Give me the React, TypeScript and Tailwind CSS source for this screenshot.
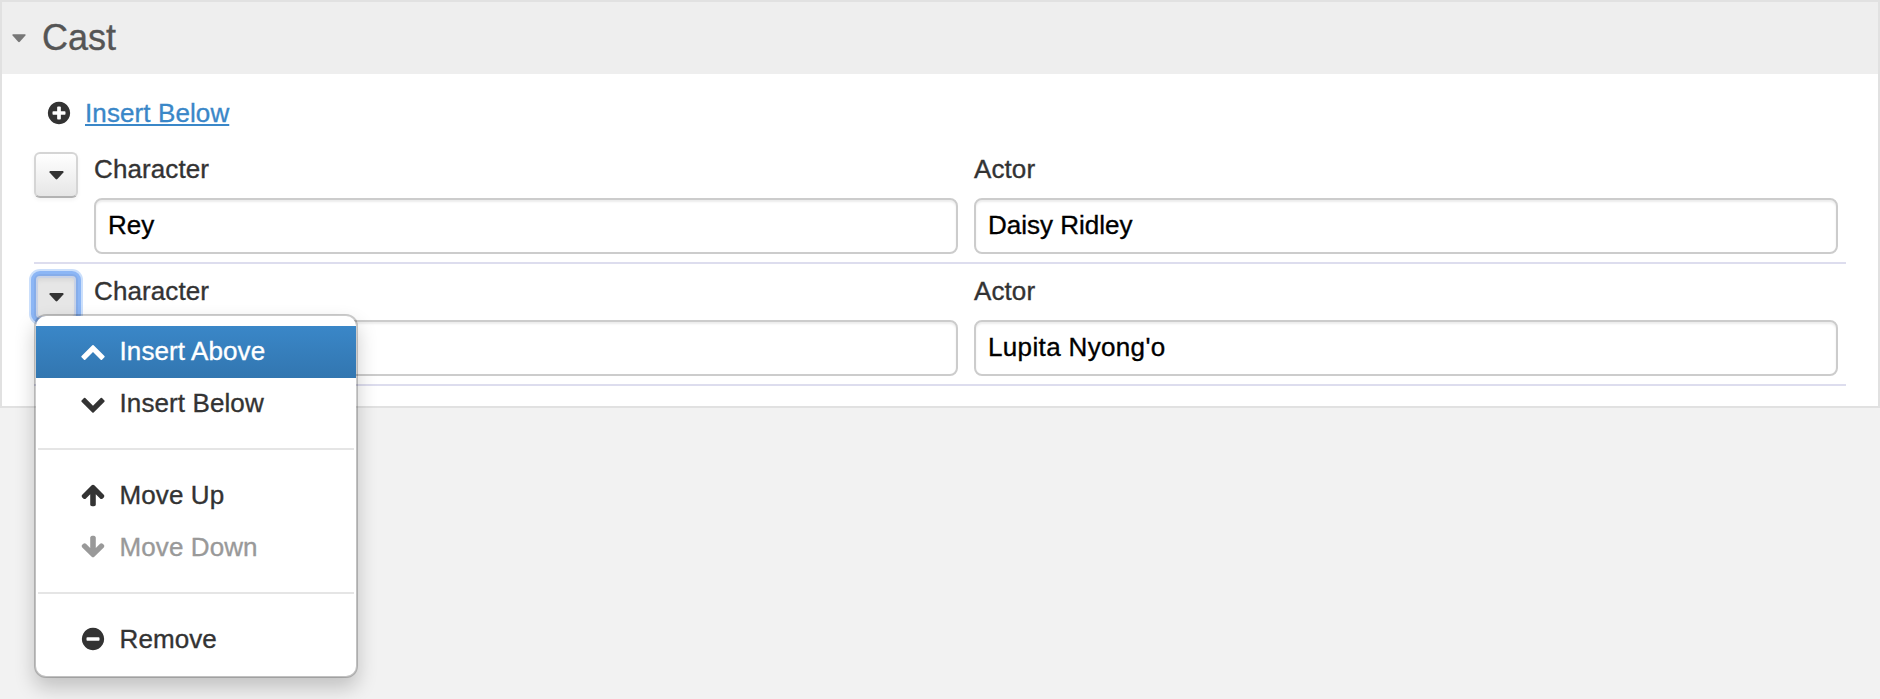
import React from "react";

const circle =
  "M1664 896q0 209-103 385.5t-279.5 279.5-385.5 103-385.5-103-279.5-279.5-103-385.5 103-385.5 279.5-279.5 385.5-103 385.5 103 279.5 279.5 103 385.5z";

const icons = {
  plus:
    "M1344 960v-128q0-26-19-45t-45-19h-256v-256q0-26-19-45t-45-19h-128q-26 0-45 19t-19 45v256h-256q-26 0-45 19t-19 45v128q0 26 19 45t45 19h256v256q0 26 19 45t45 19h128q26 0 45-19t19-45v-256h256q26 0 45-19t19-45z" +
    circle,
  minus:
    "M1344 960v-128q0-26-19-45t-45-19h-768q-26 0-45 19t-19 45v128q0 26 19 45t45 19h768q26 0 45-19t19-45z" +
    circle,
  chevronUp:
    "M1683 1331l-166 165q-19 19-45 19t-45-19l-531-531-531 531q-19 19-45 19t-45-19l-166-165q-19-19-19-45.5t19-45.5l742-741q19-19 45-19t45 19l742 741q19 19 19 45.5t-19 45.5z",
  chevronDown:
    "M1683 808l-742 741q-19 19-45 19t-45-19l-742-741q-19-19-19-45.5t19-45.5l166-165q19-19 45-19t45 19l531 531 531-531q19-19 45-19t45 19l166 165q19 19 19 45.5t-19 45.5z",
  arrowUp:
    "M1675 971q0 51-37 90l-75 75q-38 38-91 38-54 0-90-38l-294-293v704q0 52-37.5 84.5t-90.5 32.5h-128q-53 0-90.5-32.5t-37.5-84.5v-704l-294 293q-36 38-90 38t-90-38l-75-75q-38-38-38-90 0-53 38-91l651-651q35-37 90-37 54 0 91 37l651 651q37 39 37 91z",
  arrowDown:
    "M1675 832q0 53-37 90l-651 652q-39 37-91 37-53 0-90-37l-651-652q-38-36-38-90 0-53 38-91l74-75q39-37 91-37 53 0 90 37l294 294v-704q0-52 38-90t90-38h128q52 0 90 38t38 90v704l294-294q37-37 90-37 52 0 91 37l75 75q37 39 37 91z",
};

function Icon({ name }: { name: keyof typeof icons }) {
  return (
    <svg viewBox="0 0 1792 1792" className="size-[26px] shrink-0" fill="currentColor">
      <path fillRule="evenodd" d={icons[name]} />
    </svg>
  );
}

function Caret({ className }: { className: string }) {
  return (
    <svg viewBox="0 0 15 9" className={className} fill="currentColor">
      <path d="M1 0h13q1 .6.4 1.4l-6 6.6q-.9.8-1.8 0l-6-6.6q-.6-.8.4-1.4z" />
    </svg>
  );
}

function Field({
  label,
  value,
  valueClass = "",
}: {
  label: string;
  value: string;
  valueClass?: string;
}) {
  return (
    <label className="flex flex-1 flex-col">
      <span className="mt-[9px] h-[47px] leading-9 tracking-[0.1px]">{label}</span>
      <input
        defaultValue={value}
        className={`h-14 w-full rounded-lg border-2 border-[#ccc] bg-white px-3 pb-px text-black shadow-[inset_0_2px_2px_rgba(0,0,0,0.075)] outline-none ${valueClass}`}
      />
    </label>
  );
}

function CastRow({
  character,
  actor,
  actorClass,
  open = false,
}: {
  character: string;
  actor: string;
  actorClass?: string;
  open?: boolean;
}) {
  return (
    <div className="flex h-[122px] border-b-2 border-[#dde] pr-2">
      <div className="relative mr-4 w-11 pt-[10px]">
        <button
          className={
            open
              ? "flex h-[46px] w-11 items-center justify-center rounded-md border-2 border-[#86adea] bg-[#e6e6e6] shadow-[0_0_0_3px_#8cb6f5,0_0_0_5px_#cbdffb,inset_0_0_0_2px_#c8d2e6,inset_0_4px_5px_rgba(0,0,0,0.07)]"
              : "flex h-[46px] w-11 items-center justify-center rounded-md border-2 border-[#d5d5d5] border-b-[#b3b3b3] bg-linear-to-b from-white to-[#e6e6e6] shadow-[inset_0_2px_0_rgba(255,255,255,0.2),0_2px_4px_rgba(0,0,0,0.05)]"
          }
        >
          <Caret className="h-[9px] w-[15px]" />
        </button>
        {open && <Menu />}
      </div>
      <div className="flex flex-1 gap-4">
        <Field label="Character" value={character} />
        <Field label="Actor" value={actor} valueClass={actorClass} />
      </div>
    </div>
  );
}

function MenuItem({
  icon,
  label,
  className = "",
}: {
  icon: keyof typeof icons;
  label: string;
  className?: string;
}) {
  return (
    <li className={`flex h-[52px] items-center gap-[13.5px] pb-0.5 pl-11 ${className}`}>
      <Icon name={icon} />
      <span className="pb-px tracking-[0.1px]">{label}</span>
    </li>
  );
}

function Divider() {
  return <li className="mx-0.5 mt-[18px] mb-5 h-0.5 bg-[#e5e5e5]" />;
}

function Menu() {
  return (
    <ul className="absolute top-[50px] left-0 z-10 h-[364px] w-[324px] rounded-xl border-2 border-black/20 bg-white bg-clip-padding py-[10px] shadow-[0_10px_20px_rgba(0,0,0,0.2)]">
      <MenuItem
        icon="chevronUp"
        label="Insert Above"
        className="bg-linear-to-b from-[#3a87c8] to-[#3276b0] text-white"
      />
      <MenuItem icon="chevronDown" label="Insert Below" />
      <Divider />
      <MenuItem icon="arrowUp" label="Move Up" />
      <MenuItem icon="arrowDown" label="Move Down" className="text-[#999]" />
      <Divider />
      <MenuItem icon="minus" label="Remove" />
    </ul>
  );
}

export default function App() {
  return (
    <div className="h-[699px] overflow-hidden bg-[#f2f2f2] font-['Liberation_Sans',Arial,sans-serif] text-[26px] leading-10 text-[#333] [-webkit-text-stroke:0.35px_currentColor]">
      <section className="h-[408px] border-2 border-[#e1e1e1] bg-white">
        <header className="flex h-[72px] items-center bg-[#eee] pl-[10px]">
          <Caret className="h-[9px] w-[14px] text-[#777]" />
          <h2 className="ml-4 pb-px text-4xl text-[#555]">Cast</h2>
        </header>
        <div className="pr-8 pl-8">
          <div className="flex h-[68px] items-center gap-[13.5px] pt-[10px] pl-[11.5px]">
            <Icon name="plus" />
            <a className="tracking-[0.1px] text-[#3a87c8] underline decoration-2 underline-offset-2">
              Insert Below
            </a>
          </div>
          <CastRow character="Rey" actor="Daisy Ridley" />
          <CastRow character="" actor="Lupita Nyong'o" actorClass="tracking-[0.35px]" open />
        </div>
      </section>
    </div>
  );
}
